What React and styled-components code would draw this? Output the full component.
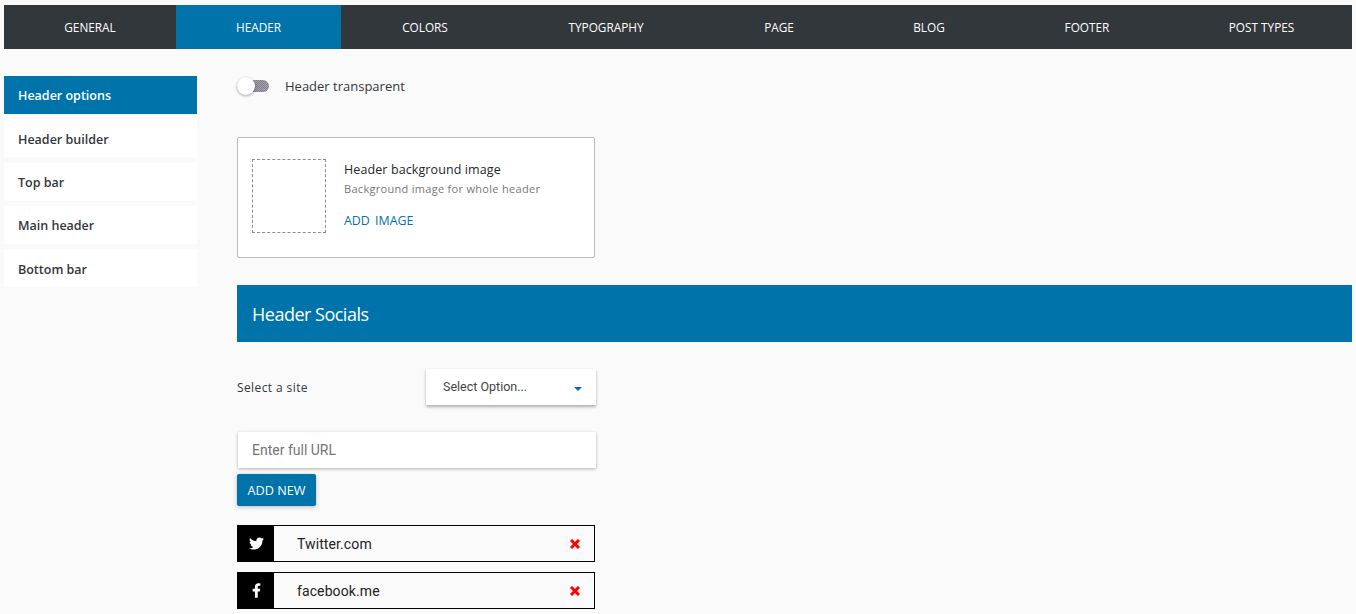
import React from "react";
import styled, { createGlobalStyle } from "styled-components";

const Global = createGlobalStyle`
  html, body { margin: 0; padding: 0; background: #fafafa; overflow: hidden; }
  body { font-family: "Open Sans", "Noto Sans", sans-serif; color: #32373c; }
  * { box-sizing: border-box; }
`;
const Page = styled.div`
  width: 1356px; height: 614px; padding: 5px 4px 0; overflow: hidden;
`;
const Nav = styled.nav`
  display: flex; height: 44px; background: #32373c;
`;
const Tab = styled.a`
  flex: 0 0 ${p => p.$width}px; display: flex; align-items: center; justify-content: center;
  padding-bottom: 1px;
  color: #fff; font-size: 11.8px; text-transform: uppercase;
  background: ${p => (p.$active ? "#0073aa" : "transparent")};
`;
const Body = styled.div`
  display: flex; align-items: flex-start; padding-top: 27px;
`;
const Side = styled.aside`
  width: 193px; flex: none; display: flex; flex-direction: column; gap: 5.3px;
`;
const SideItem = styled.a`
  height: 38px; display: flex; align-items: center; padding: ${p => (p.$active ? "0" : "2px")} 14px 0;
  font-size: 12.5px; font-weight: 600;
  background: ${p => (p.$active ? "#0073aa" : "#fff")};
  color: ${p => (p.$active ? "#fff" : "#32373c")};
`;
const Main = styled.main`
  flex: 1; margin-left: 40px; display: flex; flex-direction: column; align-items: flex-start;
`;
const ToggleRow = styled.label`
  display: flex; align-items: center; height: 20px; font-size: 13px;
`;
const Track = styled.span`
  position: relative; width: 32px; height: 12px; border-radius: 6px;
  background: repeating-conic-gradient(#85808c 0 25%, #a5a0ac 0 50%) 0 0 / 2px 2px;
  margin-right: 16px;
`;
const Knob = styled.span`
  position: absolute; left: 0; top: -3px; width: 18px; height: 18px; border-radius: 50%;
  background: #fff; box-shadow: 0 1px 3px rgba(0,0,0,.35);
`;
const ImageCard = styled.div`
  margin-top: 41px; width: 358px; height: 121px; background: #fff;
  border: 1px solid #bbb; border-radius: 2px; padding: 21px 14px; display: flex; gap: 18px;
`;
const Placeholder = styled.div`
  width: 74px; height: 74px; border: 1px dashed #8f8a96; flex: none;
`;
const CardText = styled.div`
  display: flex; flex-direction: column; align-items: flex-start; padding-top: 2px;
`;
const CardTitle = styled.div`
  font-size: 12.5px; line-height: 18px; color: #23282d; letter-spacing: .1px;
`;
const CardHint = styled.div`
  font-size: 11px; line-height: 18px; margin-top: 1px; color: #777; letter-spacing: .3px;
`;
const AddImage = styled.a`
  font-size: 12.4px; line-height: 18px; margin-top: 14px; color: #0073aa; word-spacing: 2px;
`;
const Section = styled.h2`
  margin: 27px 0 0; width: 1115px; height: 57px; background: #0073aa; color: #fff;
  font-size: 18px; letter-spacing: -.5px; font-weight: 400; display: flex; align-items: center; padding: 0 15px;
`;
const SelectRow = styled.div`
  margin-top: 27px; width: 359px; display: flex; align-items: center; justify-content: space-between;
`;
const SelectLabel = styled.span`
  font-size: 12px; letter-spacing: .4px;
`;
const SelectBox = styled.div`
  width: 170px; height: 36px; background: #fff; display: flex; align-items: center;
  justify-content: space-between; padding: 0 14px 2px 17px;
  font-family: Roboto, sans-serif; font-size: 12.5px; color: #444;
  box-shadow: 0 2px 3px rgba(0,0,0,.3);
`;
const Caret = styled.span`
  width: 0; height: 0; margin-top: 5px;
  border-left: 4px solid transparent; border-right: 4px solid transparent; border-top: 4px solid #0073aa;
`;
const UrlInput = styled.input`
  margin-top: 27px; width: 358px; height: 36px; margin-left: 1px; border: 0; outline: 0; background: #fff;
  padding: 0 14px; font-family: Roboto, sans-serif; font-size: 14px; color: #444;
  box-shadow: 0 1px 3px rgba(0,0,0,.3);
  &::placeholder { color: #757575; opacity: 1; }
`;
const AddButton = styled.button`
  margin-top: 6px; width: 79px; height: 32px; border: 0; border-radius: 2px; background: #0073aa; color: #fff;
  font-family: "Open Sans", sans-serif; font-size: 12.7px; padding: 0;
  box-shadow: 0 1px 4px rgba(0,0,0,.25);
`;
const SocialList = styled.div`
  margin-top: 19px; display: flex; flex-direction: column; gap: 10px;
`;
const Social = styled.div`
  width: 358px; height: 37px; border: 1px solid #000; display: flex; align-items: center; padding-right: 14px;
`;
const SocialIcon = styled.span`
  width: 36px; height: 35px; background: #000; display: flex; align-items: center; justify-content: center; flex: none;
`;
const SocialName = styled.span`
  flex: 1; padding-left: 23px; font-family: Roboto, sans-serif; font-size: 14px; color: #222; letter-spacing: .1px;
`;

const Twitter = () => (
  <svg width="15" height="13" viewBox="0 0 512 416" fill="#fff">
    <path d="M459.4 103.6c.3 4.5.3 9.100.3 13.700 0 138.700-105.600 298.600-298.600 298.600-59.500 0-114.700-17.200-161.100-47.100 8.400 1 16.600 1.300 25.300 1.300 49.100 0 94.200-16.600 130.300-44.800-46.100-1-84.800-31.200-98.100-72.800 6.500 1 13 1.600 19.800 1.600 9.400 0 18.800-1.300 27.600-3.600-48.100-9.700-84.100-52-84.100-103v-1.300c14 7.800 30.200 12.700 47.400 13.300-28.300-18.800-46.800-51-46.800-87.400 0-19.500 5.200-37.400 14.300-53 51.700 63.700 129.300 105.300 216.400 109.800-1.600-7.800-2.600-15.900-2.600-24 0-57.800 46.800-104.900 104.900-104.900 30.200 0 57.500 12.700 76.700 33.100 23.700-4.500 46.500-13.300 66.600-25.300-7.800 24-24.400 44.200-46.100 57.200 21.100-2.300 41.600-8.100 60.400-16.200-14.300 20.800-32.200 39.300-52.600 54.200z"/>
  </svg>
);
const Facebook = () => (
  <svg width="9" height="15" viewBox="0 0 320 512" fill="#fff">
    <path d="M279.100 288l14.200-92.700h-88.900v-60.100c0-25.300 12.400-50.100 52.200-50.100h40.400V6.300S260.400 0 225.400 0c-73.200 0-121.100 44.400-121.100 124.700v70.600H22.900V288h81.400v224h100.200V288z"/>
  </svg>
);
const Cross = () => (
  <svg width="10" height="10" viewBox="0 0 10 10" stroke="#f00" strokeWidth="3" fill="none">
    <path d="M1 1l8 8M9 1l-8 8" />
  </svg>
);

const tabs = [
  ["General", 172], ["Header", 165], ["Colors", 168], ["Typography", 194],
  ["Page", 152], ["Blog", 148], ["Footer", 168], ["Post types", 181],
];
const sideItems = ["Header options", "Header builder", "Top bar", "Main header", "Bottom bar"];

export default function App() {
  return (
    <>
      <Global />
      <Page>
        <Nav>
          {tabs.map(([t, w]) => <Tab key={t} $width={w} $active={t === "Header"}>{t}</Tab>)}
        </Nav>
        <Body>
          <Side>
            {sideItems.map((s, i) => <SideItem key={s} $active={i === 0}>{s}</SideItem>)}
          </Side>
          <Main>
            <ToggleRow>
              <Track><Knob /></Track>
              Header transparent
            </ToggleRow>
            <ImageCard>
              <Placeholder />
              <CardText>
                <CardTitle>Header background image</CardTitle>
                <CardHint>Background image for whole header</CardHint>
                <AddImage>ADD IMAGE</AddImage>
              </CardText>
            </ImageCard>
            <Section>Header Socials</Section>
            <SelectRow>
              <SelectLabel>Select a site</SelectLabel>
              <SelectBox>Select Option...<Caret /></SelectBox>
            </SelectRow>
            <UrlInput placeholder="Enter full URL" />
            <AddButton>ADD NEW</AddButton>
            <SocialList>
              <Social>
                <SocialIcon><Twitter /></SocialIcon>
                <SocialName>Twitter.com</SocialName>
                <Cross />
              </Social>
              <Social>
                <SocialIcon><Facebook /></SocialIcon>
                <SocialName>facebook.me</SocialName>
                <Cross />
              </Social>
            </SocialList>
          </Main>
        </Body>
      </Page>
    </>
  );
}
